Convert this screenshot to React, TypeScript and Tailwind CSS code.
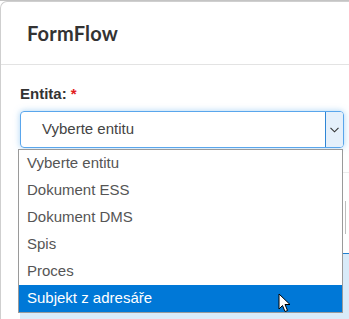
import React from "react";

const OPTIONS = [
  "Vyberte entitu",
  "Dokument ESS",
  "Dokument DMS",
  "Spis",
  "Proces",
  "Subjekt z adresáře",
];

function Cursor() {
  return (
    <svg width="14" height="21" viewBox="0 0 14 21" className="absolute left-[278px] top-[293px]">
      <path
        d="M1 1 L1 16 L4.5 12.5 L7 18.5 L9.5 17.5 L7 11.5 L12 11.5 Z"
        fill="#fff"
        stroke="#000"
        strokeWidth="1"
        strokeLinejoin="miter"
      />
    </svg>
  );
}

export default function App() {
  return (
    <div className="relative h-[319px] w-[349px] overflow-hidden bg-white font-['Liberation_Sans',Arial,sans-serif]">
      <div className="h-px w-full bg-[#c4c4c4]" />
      <div className="h-[318px] rounded-tl-[7px] border-l border-t border-[#cfcfcf] bg-white">
        {/* header */}
        <div className="flex h-[63px] items-center border-b border-[#e3e3e3] pl-[26px]">
          <h1 className="font-['Lato',sans-serif] text-[20px] font-bold tracking-[0.2px] text-[#333]">
            FormFlow
          </h1>
        </div>

        {/* body */}
        <div className="relative pl-[19px] pt-[20px]">
          <label className="block text-[15px] font-bold leading-[18px] text-[#333]">
            Entita: <span className="text-[#e21b1b]">*</span>
          </label>
          <div className="mt-[8px] flex h-[37px] w-[324px] overflow-hidden rounded-[4px] border border-[#5aa6ec] shadow-[0_0_6px_rgba(102,175,233,0.55)]">
            <div className="flex flex-1 items-center pl-[21px] text-[15px] text-[#444]">
              Vyberte entitu
            </div>
            <div className="flex w-[18px] items-center justify-center border-l border-[#2f86d6] bg-[#e5f0fb]">
              <svg width="9" height="6" viewBox="0 0 9 6">
                <path d="M0.5 0.8 L4.5 4.8 L8.5 0.8" fill="none" stroke="#333" strokeWidth="1.1" />
              </svg>
            </div>
          </div>

          {/* content underneath the open list */}
          <div className="mt-[24px] h-px w-full bg-[#ececec]" />
          <div className="ml-[306px] mt-[28px] h-[33px] w-[20px] border-r border-[#bdbdbd]" />
          <div className="mt-[19px] h-[66px] w-full border-t border-[#1f7fd0] bg-[#d9ebf9]" />
        </div>
      </div>

      {/* open dropdown list */}
      <ul className="absolute left-[18px] top-[149px] w-[325px] border border-[#9a9a9a] bg-white text-[15px]">
        {OPTIONS.map((o, i) => (
          <li
            key={o}
            className={
              i === OPTIONS.length - 1
                ? "flex h-[27px] items-center bg-[#0078d7] pl-[8px] text-white"
                : "flex h-[27px] items-center pl-[8px] text-[#555]"
            }
          >
            {o}
          </li>
        ))}
      </ul>

      <Cursor />
    </div>
  );
}
